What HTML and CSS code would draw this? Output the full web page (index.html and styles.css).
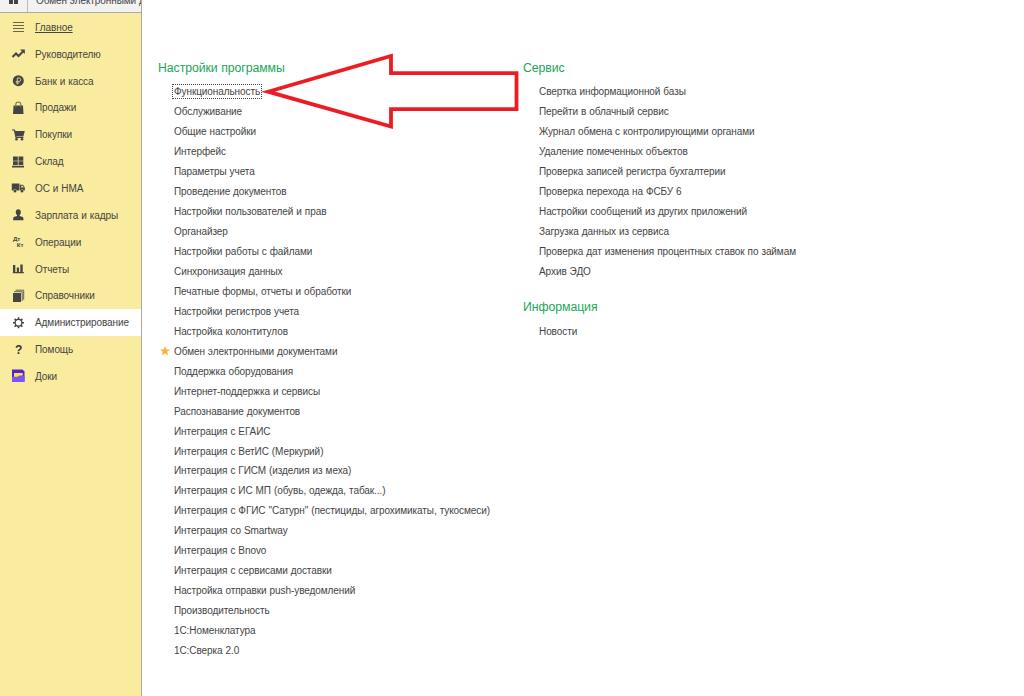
FILE: index.html
```html
<!DOCTYPE html>
<html lang="ru">
<head>
  <meta charset="UTF-8" />
  <meta name="viewport" content="width=device-width, initial-scale=1.0"/>
  <title>Администрирование</title>
  <link rel="stylesheet" href="styles.css">
</head>
<body>
  <aside class="sidebar">
    <div class="tabs">
      <div class="tab-home">
        <svg width="12" height="6" viewBox="0 0 12 6"><path d="M1 0h4v4H1zM6 0h4v4H6z" fill="#444"/></svg>
      </div>
      <div class="tab-title">Обмен электронными документами</div>
    </div>
    <nav class="menu">
      <a class="menu-item current">
        <svg class="icon" viewBox="0 0 14 14"><path d="M2 2.500h11M2 5.500h11M2 8.500h11M2 11.500h11" stroke="#6b6548" fill="none"/></svg>
        <span>Главное</span>
      </a>
      <a class="menu-item">
        <svg class="icon" viewBox="0 0 14 14"><path d="M1.500 10l3.500-3.500 2.500 2.500 4.500-4.500" stroke="#444" stroke-width="2" fill="none"/><path d="M9 2.500H13.800v4.500z" fill="#444"/></svg>
        <span>Руководителю</span>
      </a>
      <a class="menu-item">
        <svg class="icon" viewBox="0 0 14 14"><circle cx="7.300" cy="6.700" r="5.500" fill="#444"/><path d="M6.300 10.500V4h1.800a1.700 1.700 0 0 1 0 3.400H4.800M4.800 9h3.500" stroke="#d8cc8c" stroke-width="1" fill="none"/></svg>
        <span>Банк и касса</span>
      </a>
      <a class="menu-item">
        <svg class="icon" viewBox="0 0 14 14"><path d="M2.500 4.500h9.500l.5 8.500H2z" fill="#444"/><path d="M4.800 6.500V3.500a2.500 2.500 0 0 1 5 0v3" stroke="#777052" stroke-width="1.100" fill="none"/></svg>
        <span>Продажи</span>
      </a>
      <a class="menu-item">
        <svg class="icon" viewBox="0 0 14 14"><path d="M1 2h2.500L5 9.500H12.500" stroke="#444" stroke-width="1.200" fill="none"/><path d="M3.300 3H13.800L12.300 8.500H4.800z" fill="#444"/><circle cx="5.500" cy="11.300" r="1.300" fill="#444"/><circle cx="11" cy="11.300" r="1.300" fill="#444"/></svg>
        <span>Покупки</span>
      </a>
      <a class="menu-item">
        <svg class="icon" viewBox="0 0 14 14"><path d="M2 1.500h4.800v4.200H2zM7.500 1.500h4.800v4.200H7.500zM2 6.200h4.800v3.800H2zM7.500 6.200h4.800v3.800H7.500zM1 10.800h12v1.700H1z" fill="#444"/></svg>
        <span>Склад</span>
      </a>
      <a class="menu-item">
        <svg class="icon" viewBox="0 0 14 14"><path d="M.8 2.500h7.700v7H.8zM9 3.800h3L13.800 6.500v3H9z" fill="#444"/><path d="M10.200 4.700h1.500L12.800 6.500H10.200z" fill="#faec9e"/><circle cx="4" cy="10" r="1.700" fill="#444" stroke="#faec9e" stroke-width=".4"/><circle cx="11" cy="10" r="1.700" fill="#444" stroke="#faec9e" stroke-width=".4"/></svg>
        <span>ОС и НМА</span>
      </a>
      <a class="menu-item">
        <svg class="icon" viewBox="0 0 14 14"><ellipse cx="7.300" cy="4.200" rx="2.500" ry="3" fill="#444"/><path d="M6 6h2.600v2l3.300 1q.6.400.6 3.200H2.100q0-2.800.6-3.200L6 8z" fill="#444"/></svg>
        <span>Зарплата и кадры</span>
      </a>
      <a class="menu-item">
        <svg class="icon" viewBox="0 0 14 14"><text class="icon-text" x="2" y="5.500">Дт</text><text class="icon-text" x="5.800" y="12">Кт</text></svg>
        <span>Операции</span>
      </a>
      <a class="menu-item">
        <svg class="icon" viewBox="0 0 14 14"><path d="M2 3h2.300v8H2zM5.800 5.500h2.200v5.500H5.800zM9.300 2.500h2.400v8.500H9.300zM1.800 10h11v1.200h-11z" fill="#444"/></svg>
        <span>Отчеты</span>
      </a>
      <a class="menu-item">
        <svg class="icon" viewBox="0 0 14 14"><path d="M2 4h8v9H2z" fill="#444"/><path d="M3 2.700h8.200V12M4.500 1.200h8.200v9.500" stroke="#555" stroke-width=".9" fill="none"/></svg>
        <span>Справочники</span>
      </a>
      <a class="menu-item active">
        <svg class="icon" viewBox="0 0 14 14"><circle cx="7.500" cy="6.800" r="3.400" stroke="#444" stroke-width="1.300" fill="none"/><path d="M7.500 1.300v2M7.500 10.300v2M2 6.800h2M11 6.800h2M3.600 2.900l1.400 1.400M10 9.300l1.400 1.400M3.600 10.700l1.400-1.400M10 4.300l1.400-1.400" stroke="#444" stroke-width="1.600"/></svg>
        <span>Администрирование</span>
      </a>
      <a class="menu-item">
        <svg class="icon" viewBox="0 0 14 14"><text class="icon-help" x="4" y="11">?</text></svg>
        <span>Помощь</span>
      </a>
      <a class="menu-item">
        <svg class="icon" viewBox="0 0 14 14"><path d="M1 .5h10.500L13.500 2.500V12.800H1z" fill="#5324d0"/><path d="M3 4h8.700v2.500L7 8.500H3z" fill="#ffe04a"/><path d="M1 7.800h5.500L8.500 6.500h5v6.300H1z" fill="#7a55fa"/></svg>
        <span>Доки</span>
      </a>
    </nav>
  </aside>

  <main class="content">
    <section class="column column-settings">
      <h2>Настройки программы</h2>
      <ul class="links">
        <li><a class="focused">Функциональность</a></li>
        <li><a>Обслуживание</a></li>
        <li><a>Общие настройки</a></li>
        <li><a>Интерфейс</a></li>
        <li><a>Параметры учета</a></li>
        <li><a>Проведение документов</a></li>
        <li><a>Настройки пользователей и прав</a></li>
        <li><a>Органайзер</a></li>
        <li><a>Настройки работы с файлами</a></li>
        <li><a>Синхронизация данных</a></li>
        <li><a>Печатные формы, отчеты и обработки</a></li>
        <li><a>Настройки регистров учета</a></li>
        <li><a>Настройка колонтитулов</a></li>
        <li class="favorite">
          <svg class="star" viewBox="0 0 10 10"><path d="M5 0l1.300 3.500H10L7.100 5.800 8.200 9.500 5 7.300 1.800 9.500l1.100-3.700L0 3.500h3.700z" fill="#fbb03b"/></svg>
          <a>Обмен электронными документами</a>
        </li>
        <li><a>Поддержка оборудования</a></li>
        <li><a>Интернет-поддержка и сервисы</a></li>
        <li><a>Распознавание документов</a></li>
        <li><a>Интеграция с ЕГАИС</a></li>
        <li><a>Интеграция с ВетИС (Меркурий)</a></li>
        <li><a>Интеграция с ГИСМ (изделия из меха)</a></li>
        <li><a>Интеграция с ИС МП (обувь, одежда, табак...)</a></li>
        <li><a>Интеграция с ФГИС "Сатурн" (пестициды, агрохимикаты, тукосмеси)</a></li>
        <li><a>Интеграция со Smartway</a></li>
        <li><a>Интеграция с Bnovo</a></li>
        <li><a>Интеграция с сервисами доставки</a></li>
        <li><a>Настройка отправки push-уведомлений</a></li>
        <li><a>Производительность</a></li>
        <li><a>1С:Номенклатура</a></li>
        <li><a>1С:Сверка 2.0</a></li>
      </ul>
    </section>

    <section class="column">
      <h2>Сервис</h2>
      <ul class="links">
        <li><a>Свертка информационной базы</a></li>
        <li><a>Перейти в облачный сервис</a></li>
        <li><a>Журнал обмена с контролирующими органами</a></li>
        <li><a>Удаление помеченных объектов</a></li>
        <li><a>Проверка записей регистра бухгалтерии</a></li>
        <li><a>Проверка перехода на ФСБУ 6</a></li>
        <li><a>Настройки сообщений из других приложений</a></li>
        <li><a>Загрузка данных из сервиса</a></li>
        <li><a>Проверка дат изменения процентных ставок по займам</a></li>
        <li><a>Архив ЭДО</a></li>
      </ul>
      <h2>Информация</h2>
      <ul class="links">
        <li><a>Новости</a></li>
      </ul>
    </section>

    <svg class="arrow" width="260" height="80" viewBox="0 0 260 80"><path d="M6 39.700L129 4V21.200H254.500V57.200H129V74.500z" fill="#fff" stroke="#ed1c24" stroke-width="3.800"/></svg>
  </main>
</body>
</html>
```
FILE: styles.css
```css
* {
  box-sizing: border-box;
}
body {
  margin: 0;
  display: flex;
  height: 696px;
  overflow: hidden;
  background-color: #fff;
  color: #444;
  font-family: "Liberation Sans", Arial, sans-serif;
  font-size: 10px;
  letter-spacing: -0.08px;
  word-spacing: 0.3px;
}
.sidebar {
  width: 142px;
  flex-shrink: 0;
  background-color: #faec9e;
  border-right: 1px solid #aaa;
  overflow: hidden;
}
.tabs {
  display: flex;
  height: 13px;
  background-color: #f2f2f2;
  border-bottom: 1px solid #aaa;
}
.tab-home {
  width: 28px;
  padding-left: 8px;
  border-right: 1px solid #bbb;
}
.tab-home svg {
  display: block;
}
.tab-title {
  flex: 1;
  padding-left: 8px;
  margin-top: -5px;
  line-height: 12px;
  white-space: nowrap;
  overflow: hidden;
}
.menu {
  padding-top: 1px;
}
.menu-item {
  display: flex;
  align-items: center;
  height: 26.85px;
  padding-left: 11px;
  gap: 10px;
  white-space: nowrap;
}
.menu-item.current span {
  text-decoration: underline;
}
.menu-item.active {
  background-color: #fff;
}
.icon {
  width: 14px;
  height: 14px;
  flex-shrink: 0;
}
.icon-text {
  font-size: 6.2px;
  font-weight: bold;
  fill: #444;
}
.icon-help {
  font-size: 12px;
  font-weight: bold;
  fill: #333;
}
.content {
  position: relative;
  display: flex;
  flex: 1;
  padding: 60px 0 0 16px;
}
.column-settings {
  width: 365px;
}
h2 {
  margin: 0;
  height: 21.9px;
  line-height: 16px;
  font-size: 12.3px;
  font-weight: normal;
  color: #22a559;
}
.links {
  list-style: none;
  margin: 0;
  padding: 0 0 18px 16px;
}
.links li {
  display: flex;
  align-items: center;
  height: 19.96px;
  white-space: nowrap;
}
.focused {
  outline: 1px dotted #444;
  outline-offset: 1px;
}
.favorite {
  margin-left: -14px;
}
.star {
  width: 10px;
  height: 10px;
  margin-right: 4px;
}
.arrow {
  position: absolute;
  left: 120px;
  top: 52px;
  overflow: visible;
}
```
